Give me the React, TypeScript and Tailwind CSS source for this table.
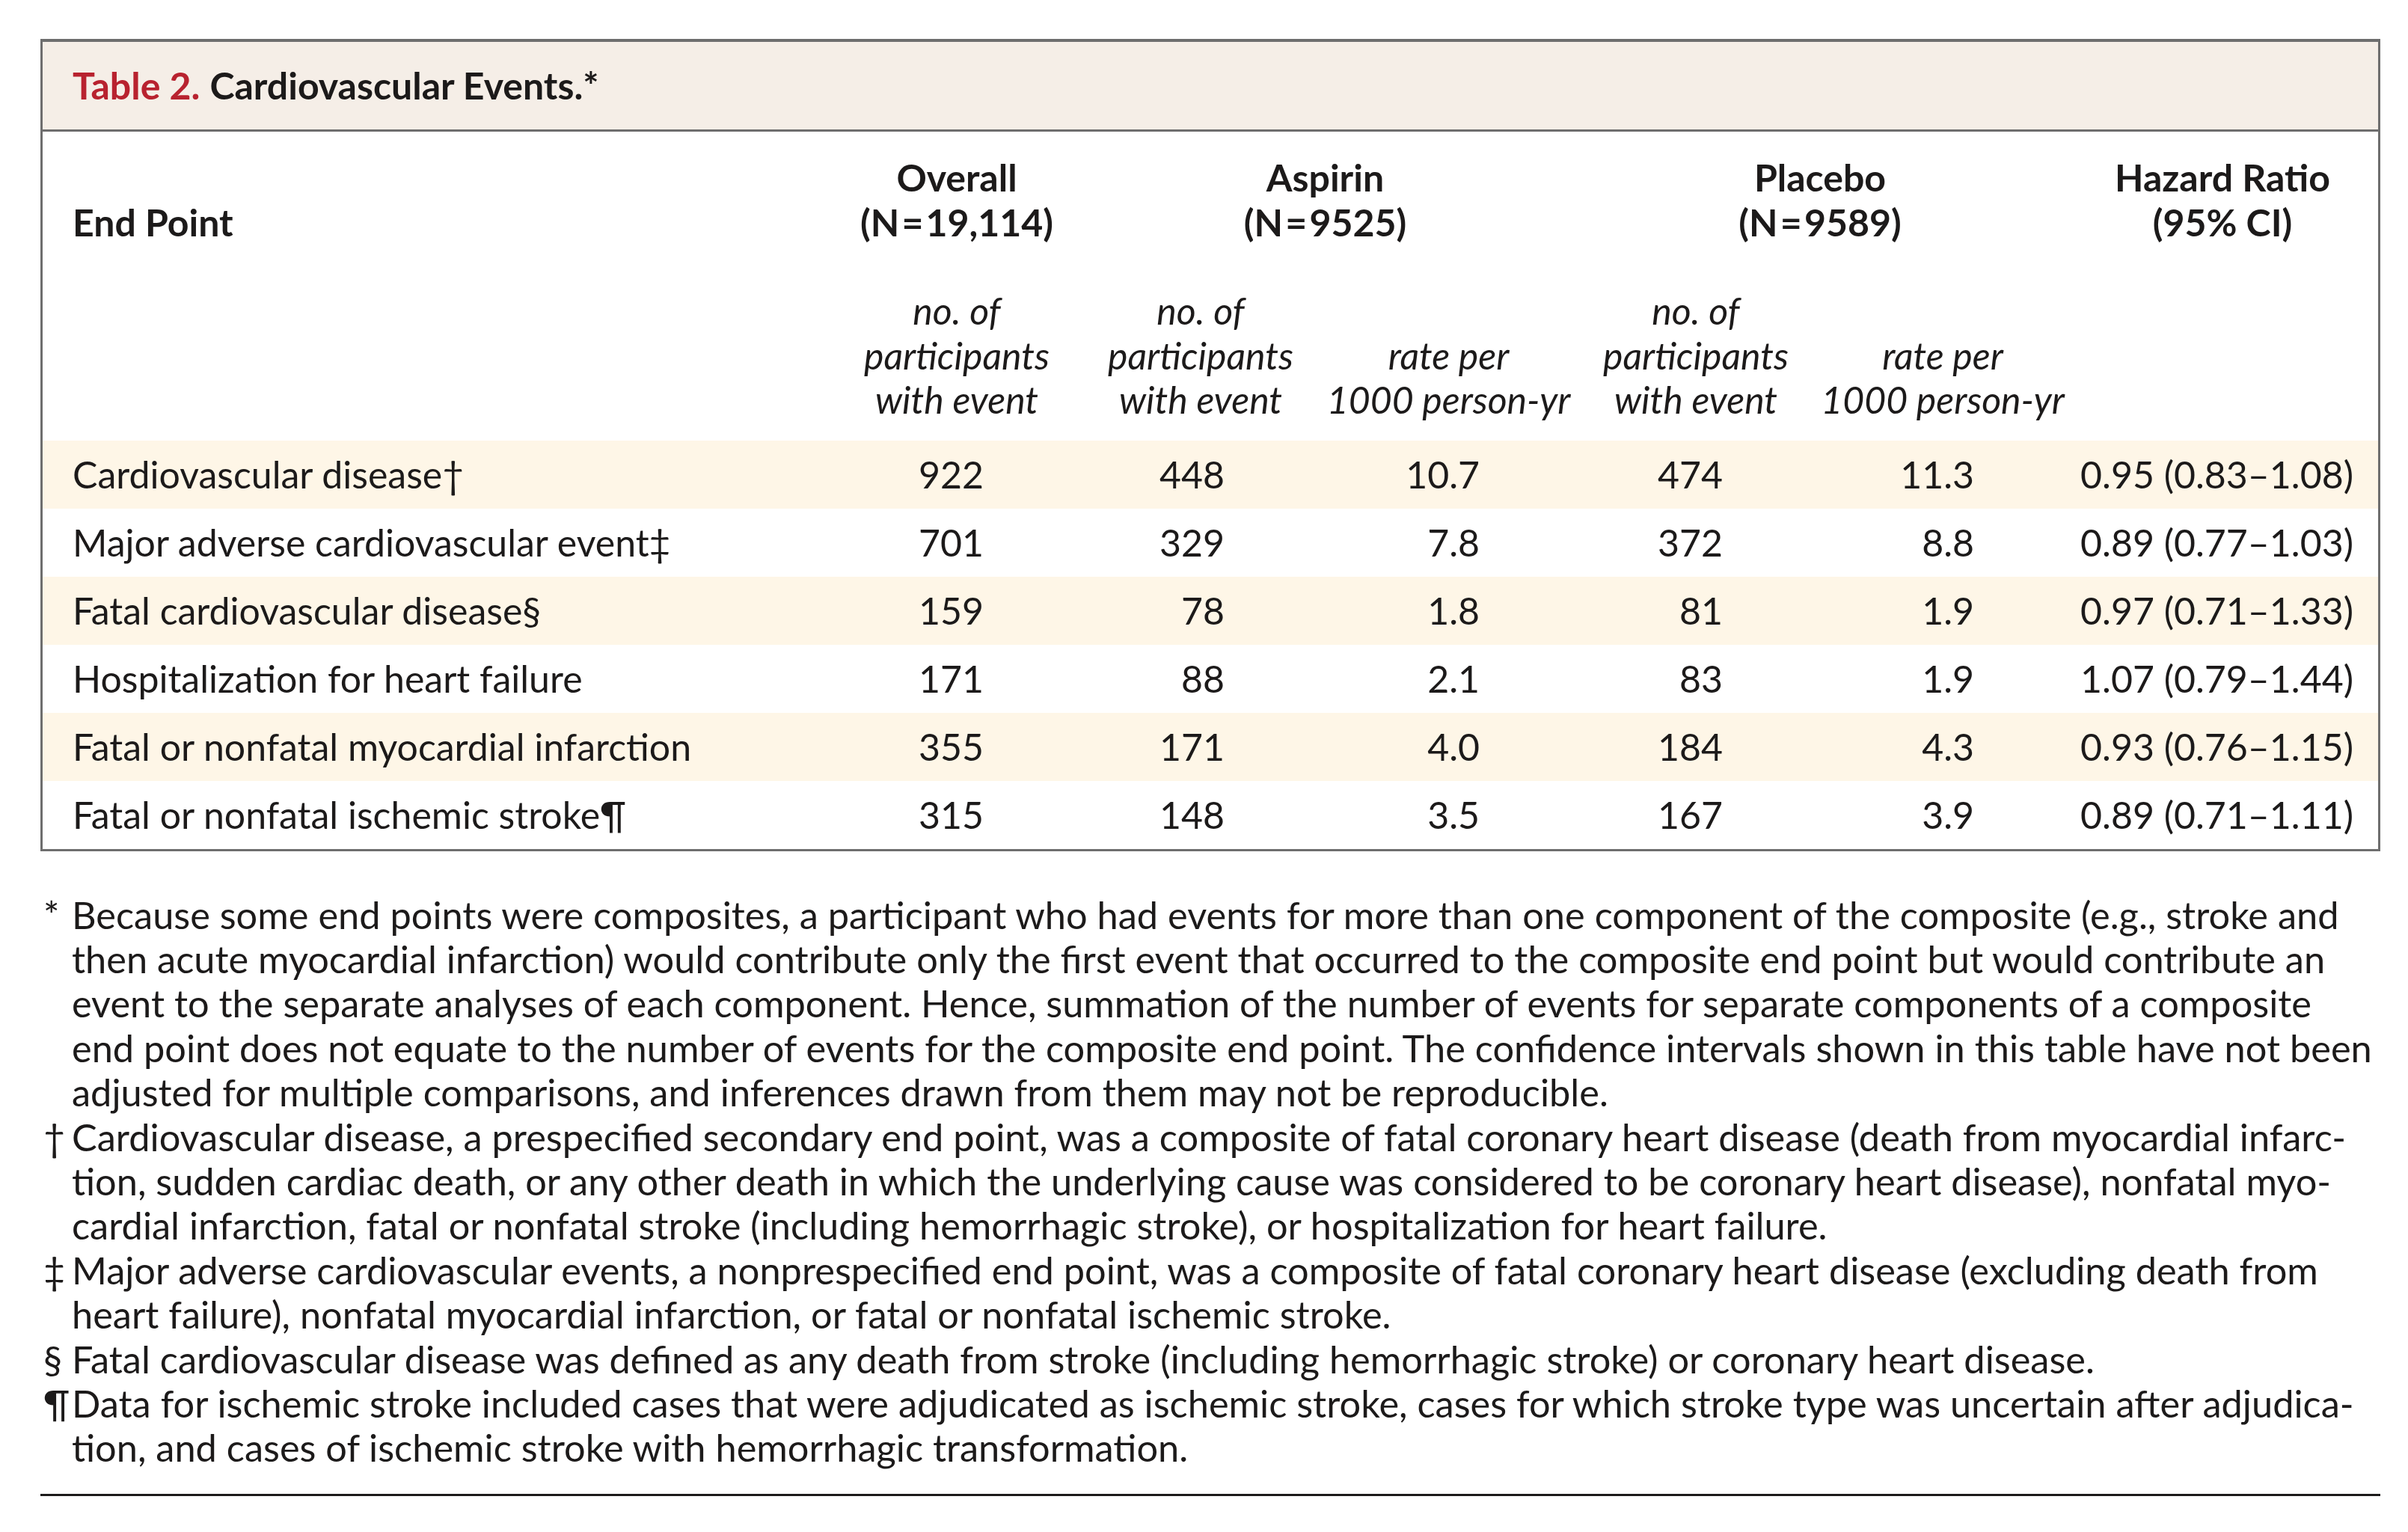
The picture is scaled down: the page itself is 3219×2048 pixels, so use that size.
const rows = [
  { label: 'Cardiovascular disease', mark: '†', overall: '922', aN: '448', aR: '10.7', pN: '474', pR: '11.3', hr: '0.95 (0.83–1.08)' },
  { label: 'Major adverse cardiovascular event', mark: '‡', overall: '701', aN: '329', aR: '7.8', pN: '372', pR: '8.8', hr: '0.89 (0.77–1.03)' },
  { label: 'Fatal cardiovascular disease', mark: '§', overall: '159', aN: '78', aR: '1.8', pN: '81', pR: '1.9', hr: '0.97 (0.71–1.33)' },
  { label: 'Hospitalization for heart failure', mark: '', overall: '171', aN: '88', aR: '2.1', pN: '83', pR: '1.9', hr: '1.07 (0.79–1.44)' },
  { label: 'Fatal or nonfatal myocardial infarction', mark: '', overall: '355', aN: '171', aR: '4.0', pN: '184', pR: '4.3', hr: '0.93 (0.76–1.15)' },
  { label: 'Fatal or nonfatal ischemic stroke', mark: '¶', overall: '315', aN: '148', aR: '3.5', pN: '167', pR: '3.9', hr: '0.89 (0.71–1.11)' },
]

const footnotes = [
  {
    mark: '*',
    lines: [
      'Because some end points were composites, a participant who had events for more than one component of the composite (e.g., stroke and',
      'then acute myocardial infarction) would contribute only the first event that occurred to the composite end point but would contribute an',
      'event to the separate analyses of each component. Hence, summation of the number of events for separate components of a composite',
      'end point does not equate to the number of events for the composite end point. The confidence intervals shown in this table have not been',
      'adjusted for multiple comparisons, and inferences drawn from them may not be reproducible.',
    ],
  },
  {
    mark: '†',
    lines: [
      'Cardiovascular disease, a prespecified secondary end point, was a composite of fatal coronary heart disease (death from myocardial infarc-',
      'tion, sudden cardiac death, or any other death in which the underlying cause was considered to be coronary heart disease), nonfatal myo-',
      'cardial infarction, fatal or nonfatal stroke (including hemorrhagic stroke), or hospitalization for heart failure.',
    ],
  },
  {
    mark: '‡',
    lines: [
      'Major adverse cardiovascular events, a nonprespecified end point, was a composite of fatal coronary heart disease (excluding death from',
      'heart failure), nonfatal myocardial infarction, or fatal or nonfatal ischemic stroke.',
    ],
  },
  {
    mark: '§',
    lines: ['Fatal cardiovascular disease was defined as any death from stroke (including hemorrhagic stroke) or coronary heart disease.'],
  },
  {
    mark: '¶',
    lines: [
      'Data for ischemic stroke included cases that were adjudicated as ischemic stroke, cases for which stroke type was uncertain after adjudica-',
      'tion, and cases of ischemic stroke with hemorrhagic transformation.',
    ],
  },
]

const cols = 'grid grid-cols-[1061px_322px_330px_333px_328px_332px_416px]'

export default function App() {
  return (
    <div className="min-h-screen bg-white font-[Lato,sans-serif] text-[#1c1a1a]">
      <div className="ml-[54px] w-[3128px] pt-[52px]">
        {/* Table */}
        <div className="border-x-[3px] border-t-[4px] border-b-[3px] border-[#6e6e6e]">
          <div className="flex h-[120px] items-center border-b-[3px] border-[#6e6e6e] bg-[#f5eee7] pl-[40px] text-[50px] font-bold">
            <span className="text-[#b8222f]">Table 2.</span>
            <span className="ml-[13px]">Cardiovascular Events.*</span>
          </div>

          {/* Header */}
          <div className={`${cols} pt-[31px] pb-[24px] text-[50px]`}>
            <div className="col-start-1 row-start-1 self-end pl-[40px] font-bold leading-[60px]">End Point</div>
            <div className="col-start-2 row-start-1 text-center font-bold leading-[60px]">
              Overall
              <br />
              (N{'\u200a'}={'\u200a'}19,114)
            </div>
            <div className="col-span-2 col-start-3 row-start-1 text-center font-bold leading-[60px]">
              Aspirin
              <br />
              (N{'\u200a'}={'\u200a'}9525)
            </div>
            <div className="col-span-2 col-start-5 row-start-1 text-center font-bold leading-[60px]">
              Placebo
              <br />
              (N{'\u200a'}={'\u200a'}9589)
            </div>
            <div className="col-start-7 row-start-1 text-center font-bold leading-[60px]">
              Hazard Ratio
              <br />
              (95% CI)
            </div>

            <div className="col-start-2 row-start-2 mt-[59px] self-end text-center italic leading-[59.5px]">
              no. of
              <br />
              participants
              <br />
              with event
            </div>
            <div className="col-start-3 row-start-2 mt-[59px] self-end text-center italic leading-[59.5px]">
              no. of
              <br />
              participants
              <br />
              with event
            </div>
            <div className="col-start-4 row-start-2 self-end text-center italic leading-[59.5px]">
              rate per
              <br />
              1000 person-yr
            </div>
            <div className="col-start-5 row-start-2 mt-[59px] self-end text-center italic leading-[59.5px]">
              no. of
              <br />
              participants
              <br />
              with event
            </div>
            <div className="col-start-6 row-start-2 self-end text-center italic leading-[59.5px]">
              rate per
              <br />
              1000 person-yr
            </div>
          </div>

          {/* Body */}
          {rows.map((r, i) => (
            <div
              key={r.label}
              className={`${cols} h-[91px] items-center text-[50px] ${i % 2 === 0 ? 'bg-[#fef6e7]' : 'bg-white'}`}
            >
              <div className="pl-[40px]">
                {r.label}
                {r.mark}
              </div>
              <div className="pr-[125px] text-right">{r.overall}</div>
              <div className="pr-[133px] text-right">{r.aN}</div>
              <div className="pr-[125px] text-right">{r.aR}</div>
              <div className="pr-[128px] text-right">{r.pN}</div>
              <div className="pr-[124px] text-right">{r.pR}</div>
              <div className="pr-[33px] text-right">{r.hr}</div>
            </div>
          ))}
        </div>

        {/* Footnotes */}
        <div className="mt-[55px] text-[50.5px] leading-[59.4px]">
          {footnotes.map((f) => (
            <div key={f.mark} className="flex">
              <div className="w-[42px] shrink-0 pl-[4px]">{f.mark}</div>
              <div>
                {f.lines.map((l) => (
                  <div key={l} className="whitespace-nowrap">
                    {l}
                  </div>
                ))}
              </div>
            </div>
          ))}
        </div>

        <div className="mt-[32px] h-[3px] bg-[#1c1a1a]" />
      </div>
    </div>
  )
}
